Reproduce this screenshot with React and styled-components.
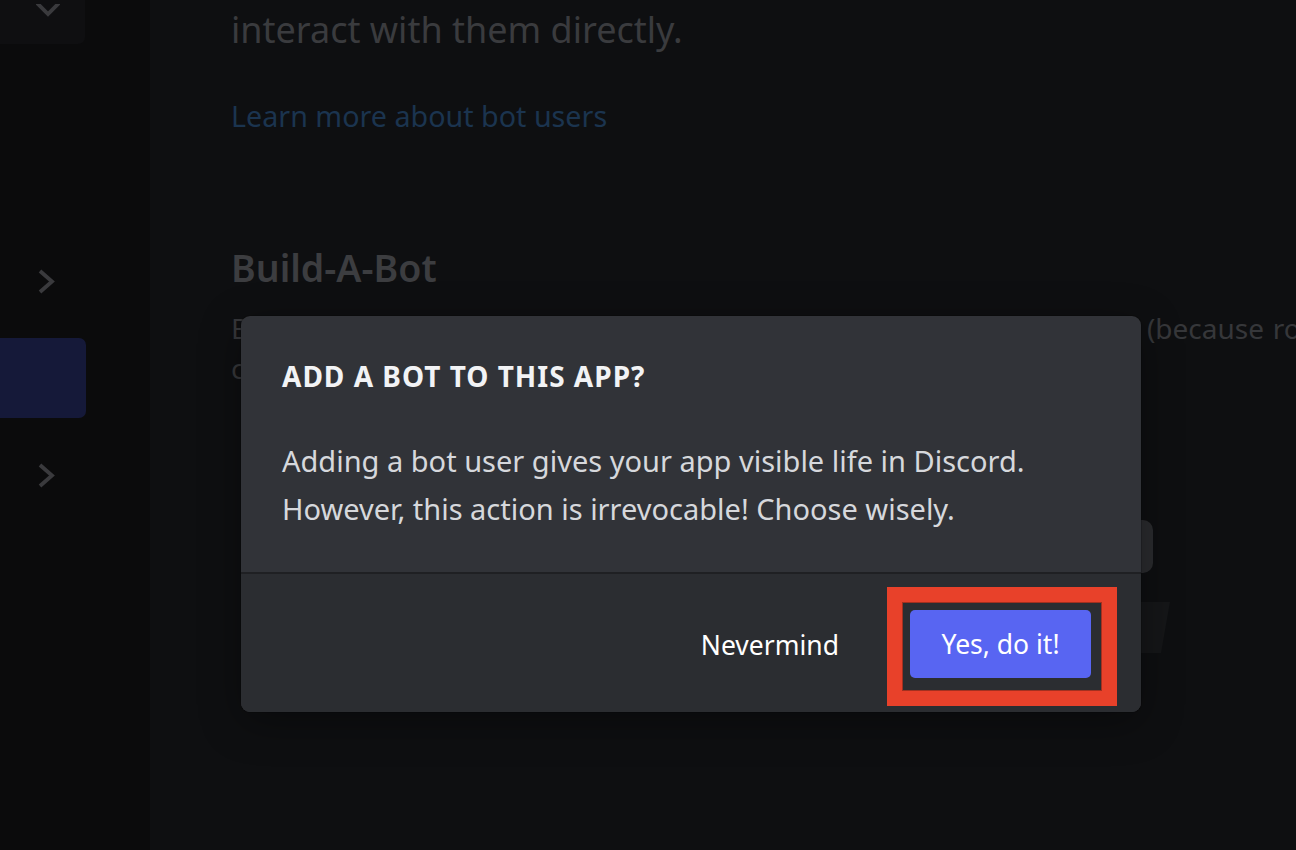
import React from "react";
import styled, { createGlobalStyle } from "styled-components";

const Global = createGlobalStyle`
  html, body { margin: 0; padding: 0; background: #0e0f11; overflow: hidden; }
  body { font-family: "Noto Sans", "Open Sans", sans-serif; }
  * { box-sizing: border-box; }
`;

const Page = styled.div`
  position: relative;
  display: grid;
  grid-template-columns: 150px 1fr;
  width: 1296px;
  height: 850px;
  overflow: hidden;
`;

const Sidebar = styled.aside`
  background: #0b0b0c;
  display: flex;
  flex-direction: column;
`;

const TopBox = styled.div`
  width: 85px;
  height: 44px;
  background: #0f0f11;
  border-bottom-right-radius: 7px;
  padding-left: 36px;
`;

const NavList = styled.div`
  margin-top: 197px;
  display: flex;
  flex-direction: column;
  gap: 17px;
`;

const NavRow = styled.div`
  width: 86px;
  height: 80px;
  display: flex;
  align-items: center;
  padding-left: 38px;
  border-radius: 0 7px 7px 0;
  background: ${(p) => (p.$selected ? "#151939" : "transparent")};
`;

const Main = styled.main`
  background: #0e0f11;
  padding: 8px 0 0 81px;
  display: flex;
  flex-direction: column;
`;

const BgText = styled.p`
  margin: 0;
  font-size: 36px;
  line-height: 44px;
  color: #3a3b3e;
  white-space: nowrap;
`;

const BgLink = styled.a`
  display: block;
  margin-top: 44px;
  font-size: 28.7px;
  line-height: 40px;
  color: #1b344f;
  text-decoration: none;
`;

const BgHeading = styled.h2`
  margin: 112px 0 0;
  font-size: 37.5px;
  line-height: 40px;
  font-weight: 600;
  color: #3c3d40;
`;

const BgDesc = styled.p`
  margin: 20px 0 0;
  font-size: 28px;
  line-height: 40px;
  color: #36373a;
  white-space: nowrap;
  word-spacing: 1.5px;
`;

const BgActions = styled.div`
  width: 939px;
  margin-top: 132px;
  display: flex;
  flex-direction: column;
  align-items: flex-end;
`;

const BgPill = styled.div`
  width: 170px;
  height: 53px;
  margin-right: 17px;
  background: #2a2b2e;
  border-radius: 10px;
`;

const BgShape = styled.svg`
  display: block;
  margin-top: 29px;
`;

const Modal = styled.div`
  position: absolute;
  left: 241px;
  top: 316px;
  width: 900px;
  border-radius: 9px;
  overflow: hidden;
  background: #313338;
  box-shadow: 0 0 0 1px rgba(0, 0, 0, 0.15), 0 10px 40px rgba(0, 0, 0, 0.35);
`;

const ModalBody = styled.div`
  padding: 44px 41px 39px;
`;

const Title = styled.h1`
  margin: 0;
  font-size: 28px;
  line-height: 32px;
  font-weight: 700;
  color: #f2f3f5;
  letter-spacing: 1px;
`;

const Text = styled.p`
  margin: 45px 0 0;
  font-size: 29px;
  line-height: 48px;
  color: #d6d8dc;
`;

const Footer = styled.div`
  background: #2b2d31;
  border-top: 2px solid #1f2023;
  display: flex;
  justify-content: flex-end;
  align-items: center;
  padding: 13px 24px 6px 0;
`;

const LinkButton = styled.button`
  background: none;
  border: none;
  padding: 0 0 4px;
  margin-right: 48px;
  font-family: inherit;
  font-size: 26.5px;
  font-weight: 400;
  color: #ffffff;
  cursor: pointer;
`;

const Highlight = styled.div`
  border: 15px solid #e8412a;
  padding: 8px 11px 13px 8px;
  box-shadow: inset 0 0 0 1px #a3301f;
  background: #2b2d31;
`;

const PrimaryButton = styled.button`
  display: block;
  width: 181px;
  height: 68px;
  border: none;
  border-radius: 5px;
  background: #5865f2;
  color: #ffffff;
  font-family: inherit;
  font-size: 26.5px;
  font-weight: 400;
  cursor: pointer;
`;

const ChevronRight = () => (
  <svg width="17" height="25" viewBox="0 0 17 25">
    <polyline points="2,2 14,12.5 2,23" fill="none" stroke="#3a3a3d" strokeWidth="3.8" />
  </svg>
);

const ChevronDown = () => (
  <svg width="24" height="13" viewBox="0 0 24 13">
    <polyline points="1,-1 12,10 23,-1" fill="none" stroke="#3a3a3d" strokeWidth="3.8" />
  </svg>
);

export default function App() {
  return (
    <>
      <Global />
      <Page>
        <Sidebar>
          <TopBox>
            <ChevronDown />
          </TopBox>
          <NavList>
            <NavRow>
              <ChevronRight />
            </NavRow>
            <NavRow $selected />
            <NavRow>
              <ChevronRight />
            </NavRow>
          </NavList>
        </Sidebar>
        <Main>
          <BgText>interact with them directly.</BgText>
          <BgLink href="#">Learn more about bot users</BgLink>
          <BgHeading>Build-A-Bot</BgHeading>
          <BgDesc>
            Bring your app to life by adding a bot user. This action is irrevocable (because robots are too
            <br />
            cool to destroy).
          </BgDesc>
          <BgActions>
            <BgPill />
            <BgShape width="70" height="51" viewBox="0 0 70 51">
              <polygon points="0,0 70,0 61,51 0,51" fill="#151618" />
            </BgShape>
          </BgActions>
        </Main>
        <Modal>
          <ModalBody>
            <Title>ADD A BOT TO THIS APP?</Title>
            <Text>
              Adding a bot user gives your app visible life in Discord.
              <br />
              However, this action is irrevocable! Choose wisely.
            </Text>
          </ModalBody>
          <Footer>
            <LinkButton>Nevermind</LinkButton>
            <Highlight>
              <PrimaryButton>Yes, do it!</PrimaryButton>
            </Highlight>
          </Footer>
        </Modal>
      </Page>
    </>
  );
}
